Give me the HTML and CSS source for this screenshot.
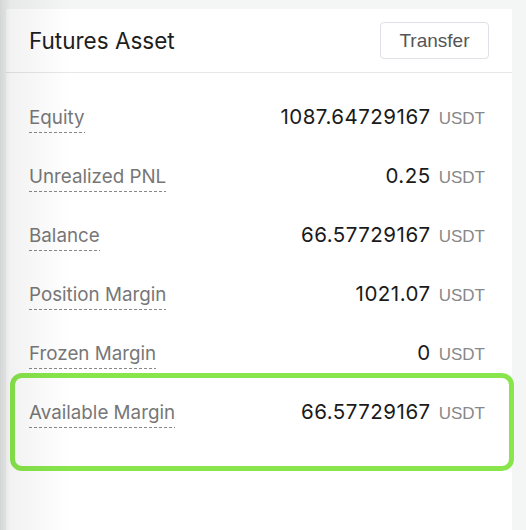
FILE: index.html
```html
<!DOCTYPE html>
<html lang="en">
 <head>
  <meta charset="utf-8">
  <title>Futures Asset</title>
  <meta name="viewport" content="width=device-width, initial-scale=1">
  <link rel="stylesheet" href="styles.css">
 </head>
 <body>
  <div class="CARD">
   <div class="HEAD">
    <h2 class="TITLE">Futures Asset</h2>
    <button class="BTN" type="button">Transfer</button>
   </div>

   <div class="LIST">
    <div class="ROW">
     <span class="LABEL">Equity</span>
     <span class="AMOUNT"><span class="NUM">1087.64729167</span><span class="UNIT">USDT</span></span>
    </div>
    <div class="ROW">
     <span class="LABEL">Unrealized PNL</span>
     <span class="AMOUNT"><span class="NUM">0.25</span><span class="UNIT">USDT</span></span>
    </div>
    <div class="ROW">
     <span class="LABEL">Balance</span>
     <span class="AMOUNT"><span class="NUM">66.57729167</span><span class="UNIT">USDT</span></span>
    </div>
    <div class="ROW">
     <span class="LABEL">Position Margin</span>
     <span class="AMOUNT"><span class="NUM">1021.07</span><span class="UNIT">USDT</span></span>
    </div>
    <div class="ROW">
     <span class="LABEL">Frozen Margin</span>
     <span class="AMOUNT"><span class="NUM">0</span><span class="UNIT">USDT</span></span>
    </div>
    <div class="ROW MARKED">
     <span class="LABEL">Available Margin</span>
     <span class="AMOUNT"><span class="NUM">66.57729167</span><span class="UNIT">USDT</span></span>
    </div>
   </div>
  </div>

  <!-- soft shadow on the left edge of the shot -->
  <div class="SHADE"></div>
 </body>
</html>
```

FILE: styles.css
```css
   BODY { margin: 0; background: #f4f5f5; font-family: Inter, "Liberation Sans", sans-serif; }
   * { box-sizing: border-box; }

   DIV.CARD { background: #ffffff; margin: 9px 14px 0 6px; height: calc(100vh - 9px); }

   DIV.HEAD { display: flex; align-items: center; justify-content: space-between;
              height: 64px; padding: 0 23px; border-bottom: 1px solid #e6e6eb; }
   H2.TITLE { margin: 0; font-size: 22.5px; font-weight: 400; color: #1e1e1e; }
   BUTTON.BTN { height: 37px; width: 109px; padding: 0; background: #ffffff;
                border: 1px solid #e0e0e6; border-radius: 4px;
                font-family: "Liberation Sans", Arial, sans-serif; font-size: 19px; color: #555555; }

   DIV.LIST { padding: 15px 27px 0 23px; }
   DIV.ROW { display: flex; align-items: center; justify-content: space-between; height: 59px; }

   SPAN.LABEL { margin-top: 6px; padding-bottom: 5px; line-height: 20px;
                font-size: 18.8px; color: #777777;
                background: repeating-linear-gradient(to right, #888888 0 3px, transparent 3px 5px)
                            left bottom / 100% 1px no-repeat; }

   SPAN.AMOUNT { display: flex; align-items: baseline; gap: 8px; line-height: 20px; }
   SPAN.NUM { font-size: 20.5px; font-weight: 400; letter-spacing: 0.5px; color: #1a1a1a; }
   SPAN.UNIT { font-family: "Liberation Sans", Arial, sans-serif; font-size: 17px; color: #888888; }

   DIV.MARKED { position: relative; }
   DIV.MARKED::after { content: ""; position: absolute; top: -10px; bottom: -29px; left: -19px; right: -29px;
                       border: 5px solid #88e64c; border-radius: 12px; pointer-events: none; }

   DIV.SHADE { position: fixed; left: 0; top: 0; bottom: 0; width: 70px; pointer-events: none;
               background: linear-gradient(to right, rgba(0,0,0,0.13), rgba(0,0,0,0.05) 15%, rgba(0,0,0,0)); }
```
